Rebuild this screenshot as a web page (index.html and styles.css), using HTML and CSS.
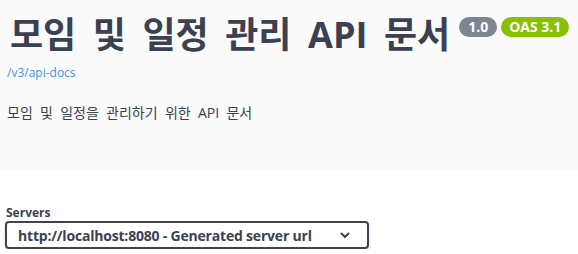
FILE: index.html
```html
<!DOCTYPE html>
<html lang="ko">
<head>
    <meta charset="UTF-8">
    <meta name="viewport" content="width=device-width, initial-scale=1.0">
    <title>모임 및 일정 관리 API 문서</title>
    <link rel="stylesheet" href="styles.css">
</head>
<body>

<!-- Info -->
<div class="info-container">
    <div class="title-row">
        <h2 class="title">모임 및 일정 관리 API 문서</h2>
        <span class="version-badge">1.0</span>
        <span class="oas-badge">OAS 3.1</span>
    </div>
    <a href="#" class="docs-link">/v3/api-docs</a>
    <p class="description">모임 및 일정을 관리하기 위한 API 문서</p>
</div>

<!-- Servers -->
<div class="servers-container">
    <div class="servers-label">Servers</div>
    <div class="server-select">
        <span>http://localhost:8080 - Generated server url</span>
        <svg width="12" height="8" viewBox="0 0 12 8">
            <path d="M2 2 L6 6 L10 2" fill="none" stroke="#3b4151" stroke-width="2"/>
        </svg>
    </div>
</div>

</body>
</html>
```

FILE: styles.css
```css
body {
    font-family: "Open Sans", "Noto Sans CJK KR", sans-serif;
    background-color: #fff;
    color: #3b4151;
    margin: 0;
    padding: 0;
}
/* Info */
.info-container {
    background-color: #fafafa;
    height: 169px;
    padding: 0 8px;
    box-sizing: border-box;
}
.title-row {
    display: flex;
    align-items: flex-start;
    padding-top: 9px;
}
.title {
    font-size: 36px;
    font-weight: 700;
    line-height: 52px;
    word-spacing: 0.2em;
    margin: 0 0 0 2px;
}
.version-badge, .oas-badge {
    color: #fff;
    font-size: 14px;
    font-weight: 700;
    line-height: 20px;
    padding: 0 8px;
    border-radius: 10px;
    margin-top: 8px;
}
.version-badge {
    background-color: #7d8492;
    padding: 0 9px;
    margin-left: 9px;
}
.oas-badge {
    background-color: #89bf04;
    margin-left: 4px;
}
.docs-link {
    display: block;
    color: #4990e2;
    font-size: 12px;
    text-decoration: none;
    line-height: 16px;
    margin-top: 4px;
    margin-left: -1px;
}
.description {
    font-size: 14px;
    line-height: 20px;
    word-spacing: 0.26em;
    margin: 22px 0 0 -1px;
}

/* Servers */
.servers-container {
    padding: 36px 0 0 5px;
}
.servers-label {
    font-size: 12px;
    font-weight: 700;
    line-height: 16px;
    margin-left: 1px;
}
.server-select {
    width: 364px;
    height: 28px;
    box-sizing: border-box;
    border: 2px solid #41444e;
    border-radius: 4px;
    box-shadow: 0 1px 2px rgba(0, 0, 0, 0.25);
    display: flex;
    align-items: center;
    justify-content: space-between;
    padding: 0 16px 0 11px;
    font-size: 14px;
    font-weight: 700;
    letter-spacing: -0.2px;
}
```
